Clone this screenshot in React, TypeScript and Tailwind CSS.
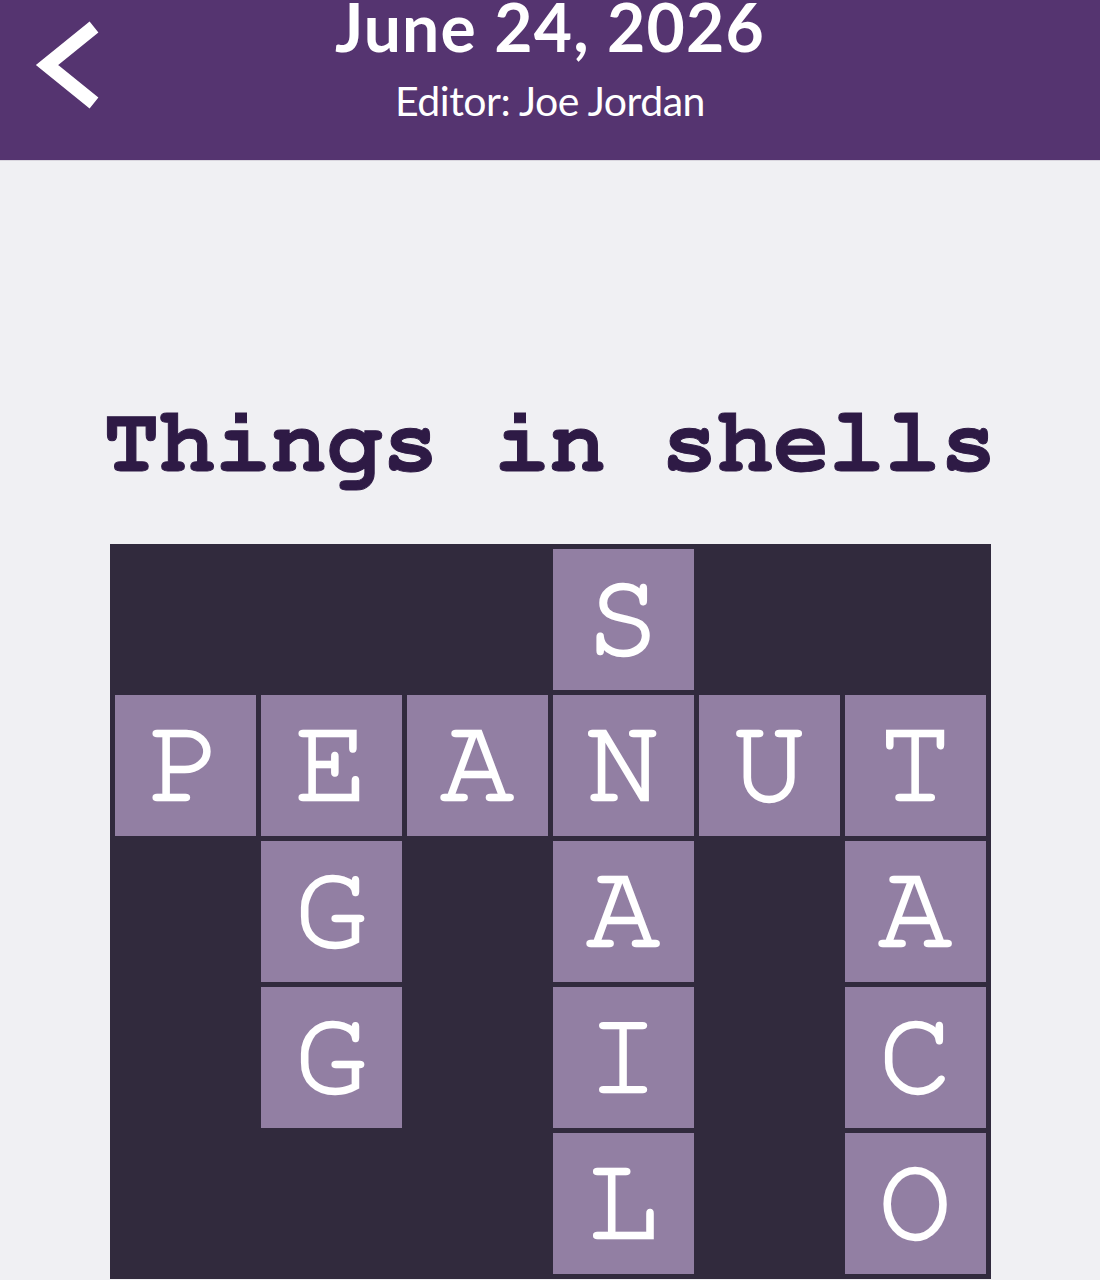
import React from "react";

const grid: string[] = [
  "   S  ",
  "PEANUT",
  " G A A",
  " G I C",
  "   L O",
];

const mono =
  "font-['Nimbus_Mono_PS','Nimbus_Mono_L','FreeMono','Courier_10_Pitch','Courier','Liberation_Mono',monospace]";

export default function App() {
  return (
    <div className="w-[1100px] h-[1280px] overflow-hidden bg-[#f0f0f3]">
      <header className="relative h-[161px] bg-[#553470] border-b border-[#d9d6de]">
        <button className="absolute left-[31px] top-[16px] w-[80px] h-[96px] flex items-center justify-center">
          <svg width="80" height="96" viewBox="0 0 80 96">
            <polyline points="63,11 16,49 63,87" fill="none" stroke="#ffffff" strokeWidth="14" strokeLinejoin="miter" />
          </svg>
        </button>
        <div className="flex flex-col items-center text-white font-['Lato',sans-serif]">
          <div className="mt-[-6px] text-[66px] leading-none font-bold tracking-[1.2px]">June 24, 2026</div>
          <div className="mt-[20px] text-[41px] leading-none font-normal tracking-[-0.5px]">Editor: Joe Jordan</div>
        </div>
      </header>
      <main className="flex flex-col items-center">
        <h1
          className={`mt-[236px] text-[93px] leading-none font-bold text-[#2e1a45] ${mono} whitespace-pre [-webkit-text-stroke:1px_#2e1a45]`}
        >
          Things in shells
        </h1>
        <div className="mt-[54px] w-[881px] bg-[#312a3d] p-[5px] grid grid-cols-6 gap-[5px]">
          {grid.flatMap((row, r) =>
            row.split("").map((ch, c) =>
              ch === " " ? (
                <div key={`${r}-${c}`} className="h-[141px]" />
              ) : (
                <div
                  key={`${r}-${c}`}
                  className={`h-[141px] bg-[#927fa3] flex items-center justify-center pb-[6px] text-white text-[122px] leading-none ${mono} [-webkit-text-stroke:2.5px_#ffffff]`}
                >
                  {ch}
                </div>
              )
            )
          )}
        </div>
      </main>
    </div>
  );
}
